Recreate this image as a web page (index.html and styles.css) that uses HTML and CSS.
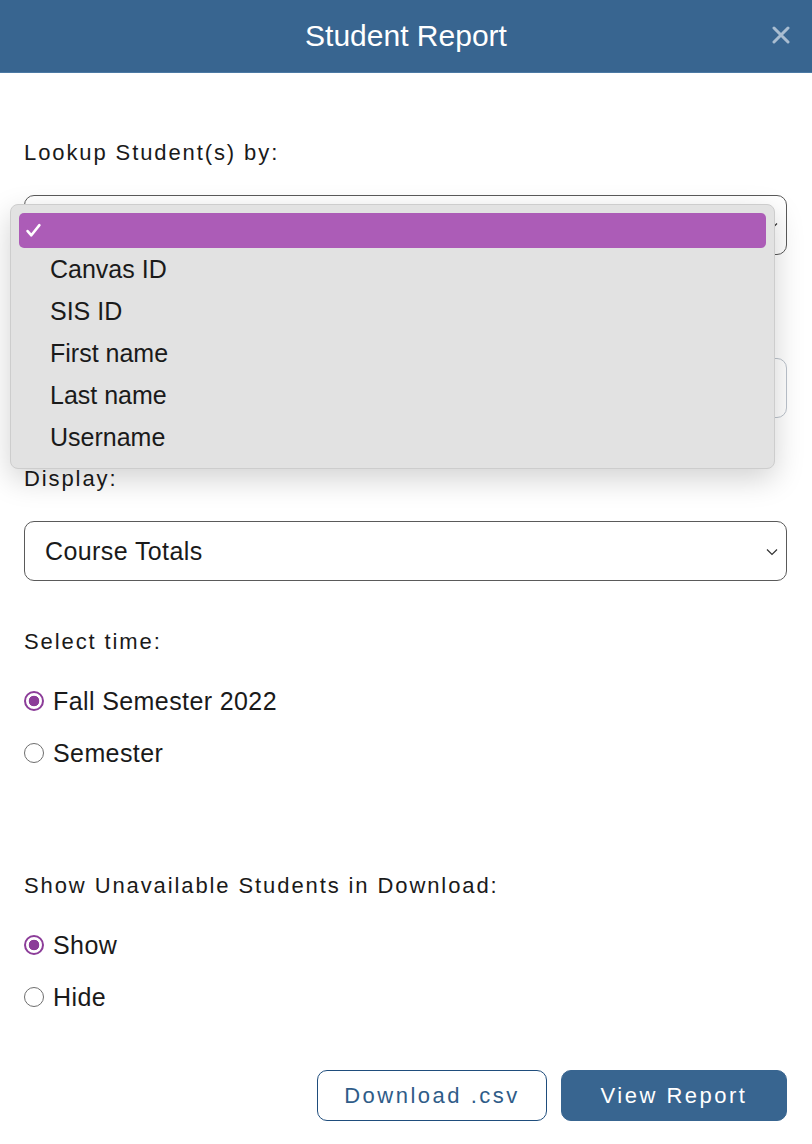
FILE: index.html
```html
<!DOCTYPE html>
<html lang="en">
<head>
  <meta charset="UTF-8" />
  <title>Student Report</title>
  <link rel="stylesheet" href="styles.css">
</head>
<body>
  <div class="modal">
    <div class="modal-header">
      <h1>Student Report</h1>
      <button class="close-btn" aria-label="Close">
        <svg width="18" height="18" viewBox="0 0 18 18"><path d="M2 2L16 16M16 2L2 16" stroke="#a9bdd1" stroke-width="3" stroke-linecap="round"/></svg>
      </button>
    </div>

    <div class="modal-body">
      <div class="field">
        <label class="field-label">Lookup Student(s) by:</label>
        <div class="select">
          <span></span>
          <svg class="chevron" width="12" height="8" viewBox="0 0 12 8"><path d="M1 1.5L6 6.5L11 1.5" fill="none" stroke="#333" stroke-width="1.2"/></svg>
        </div>
      </div>

      <!-- search field, covered by the open popup -->
      <div class="field">
        <label class="field-label"></label>
        <div class="text-input"></div>
      </div>

      <div class="field">
        <label class="field-label">Display:</label>
        <div class="select">
          <span>Course Totals</span>
          <svg class="chevron" width="12" height="8" viewBox="0 0 12 8"><path d="M1 1.5L6 6.5L11 1.5" fill="none" stroke="#333" stroke-width="1.2"/></svg>
        </div>
      </div>

      <div class="field">
        <label class="field-label">Select time:</label>
        <div class="radio-group">
          <label class="radio"><input type="radio" name="time" checked> Fall Semester 2022</label>
          <label class="radio"><input type="radio" name="time"> Semester</label>
        </div>
      </div>

      <div class="field field-spaced">
        <label class="field-label">Show Unavailable Students in Download:</label>
        <div class="radio-group">
          <label class="radio"><input type="radio" name="unavail" checked> Show</label>
          <label class="radio"><input type="radio" name="unavail"> Hide</label>
        </div>
      </div>

      <div class="actions">
        <button class="btn btn-outline">Download .csv</button>
        <button class="btn btn-primary">View Report</button>
      </div>
    </div>

    <!-- open popup of the first select -->
    <div class="dropdown">
      <div class="opt opt-selected">
        <svg width="15" height="15" viewBox="0 0 14 14"><path d="M1.5 7.5L5 11.5L12.5 2" fill="none" stroke="#fff" stroke-width="2.4" stroke-linecap="round" stroke-linejoin="round"/></svg>
      </div>
      <div class="opt">Canvas ID</div>
      <div class="opt">SIS ID</div>
      <div class="opt">First name</div>
      <div class="opt">Last name</div>
      <div class="opt">Username</div>
    </div>
  </div>
</body>
</html>
```

FILE: styles.css
```css
body {
  margin: 0;
  font-family: "Liberation Sans", Arial, sans-serif;
  color: #1a1a1a;
  background: #fff;
}
.modal {
  position: relative;
  width: 812px;
  min-height: 1144px;
  overflow: hidden;
}
.modal-header {
  height: 72px;
  background-color: #386590;
  border-bottom: 1px solid #4b79a4;
  display: flex;
  align-items: center;
  justify-content: center;
  position: relative;
}
.modal-header h1 {
  margin: 0;
  color: #fff;
  font-size: 30px;
  font-weight: normal;
}
.close-btn {
  position: absolute;
  right: 22px;
  top: 26px;
  background: none;
  border: none;
  padding: 0;
  cursor: pointer;
}
.modal-body {
  padding: 68px 25px 0 24px;
}
.field {
  margin-bottom: 49px;
}
.field-spaced {
  margin-top: 107px;
  margin-bottom: 34px;
}
.field-label {
  display: block;
  height: 24px;
  font-size: 22px;
  line-height: 24px;
  letter-spacing: 1.9px;
  margin-bottom: 30px;
}
.select, .text-input {
  height: 58px;
  border: 1px solid #5a5a5a;
  border-radius: 10px;
  box-sizing: content-box;
  display: flex;
  align-items: center;
  justify-content: space-between;
  padding: 0 8px 0 20px;
  font-size: 25px;
  letter-spacing: 0.4px;
}
.text-input {
  border-color: #bcc3cc;
}
.chevron {
  margin-top: 2px;
}
.field-label + .radio-group {
  margin-top: -30px;
  padding-top: 33px;
}
.radio-group {
  display: flex;
  flex-direction: column;
  gap: 24px;
}
.radio {
  display: flex;
  align-items: center;
  gap: 9px;
  height: 28px;
  font-size: 25px;
  letter-spacing: 0.4px;
}
.radio input {
  appearance: none;
  -webkit-appearance: none;
  margin: 0;
  width: 20px;
  height: 20px;
  border: 1px solid #6e6e6e;
  border-radius: 50%;
  background: #fff;
  box-sizing: border-box;
}
.radio input:checked {
  border: 2px solid #8c3d99;
  background: radial-gradient(circle, #8c3d99 0 5px, #fff 5.6px);
}
.actions {
  display: flex;
  justify-content: flex-end;
  gap: 14px;
  margin-top: 59px;
}
.btn {
  height: 51px;
  border-radius: 10px;
  font-family: "Liberation Sans", Arial, sans-serif;
  font-size: 22px;
  letter-spacing: 2.5px;
  cursor: pointer;
}
.btn-outline {
  width: 230px;
  background: #fff;
  border: 1px solid #1f4d7c;
  color: #2f5c88;
}
.btn-primary {
  width: 226px;
  background: #386590;
  border: 1px solid #386590;
  color: #fff;
}
.dropdown {
  position: absolute;
  left: 10px;
  top: 204px;
  width: 765px;
  box-sizing: border-box;
  background: #e2e2e2;
  border: 1px solid #cdcdcd;
  border-radius: 8px;
  padding: 8px 8px 10px;
  box-shadow: 0 10px 30px rgba(0, 0, 0, 0.18);
  z-index: 10;
}
.opt {
  height: 42px;
  line-height: 42px;
  padding-left: 31px;
  font-size: 25px;
  color: #1a1a1a;
}
.opt-selected {
  height: 35px;
  background: #ac5cb7;
  border-radius: 5px;
  padding-left: 7px;
  display: flex;
  align-items: center;
}
```
